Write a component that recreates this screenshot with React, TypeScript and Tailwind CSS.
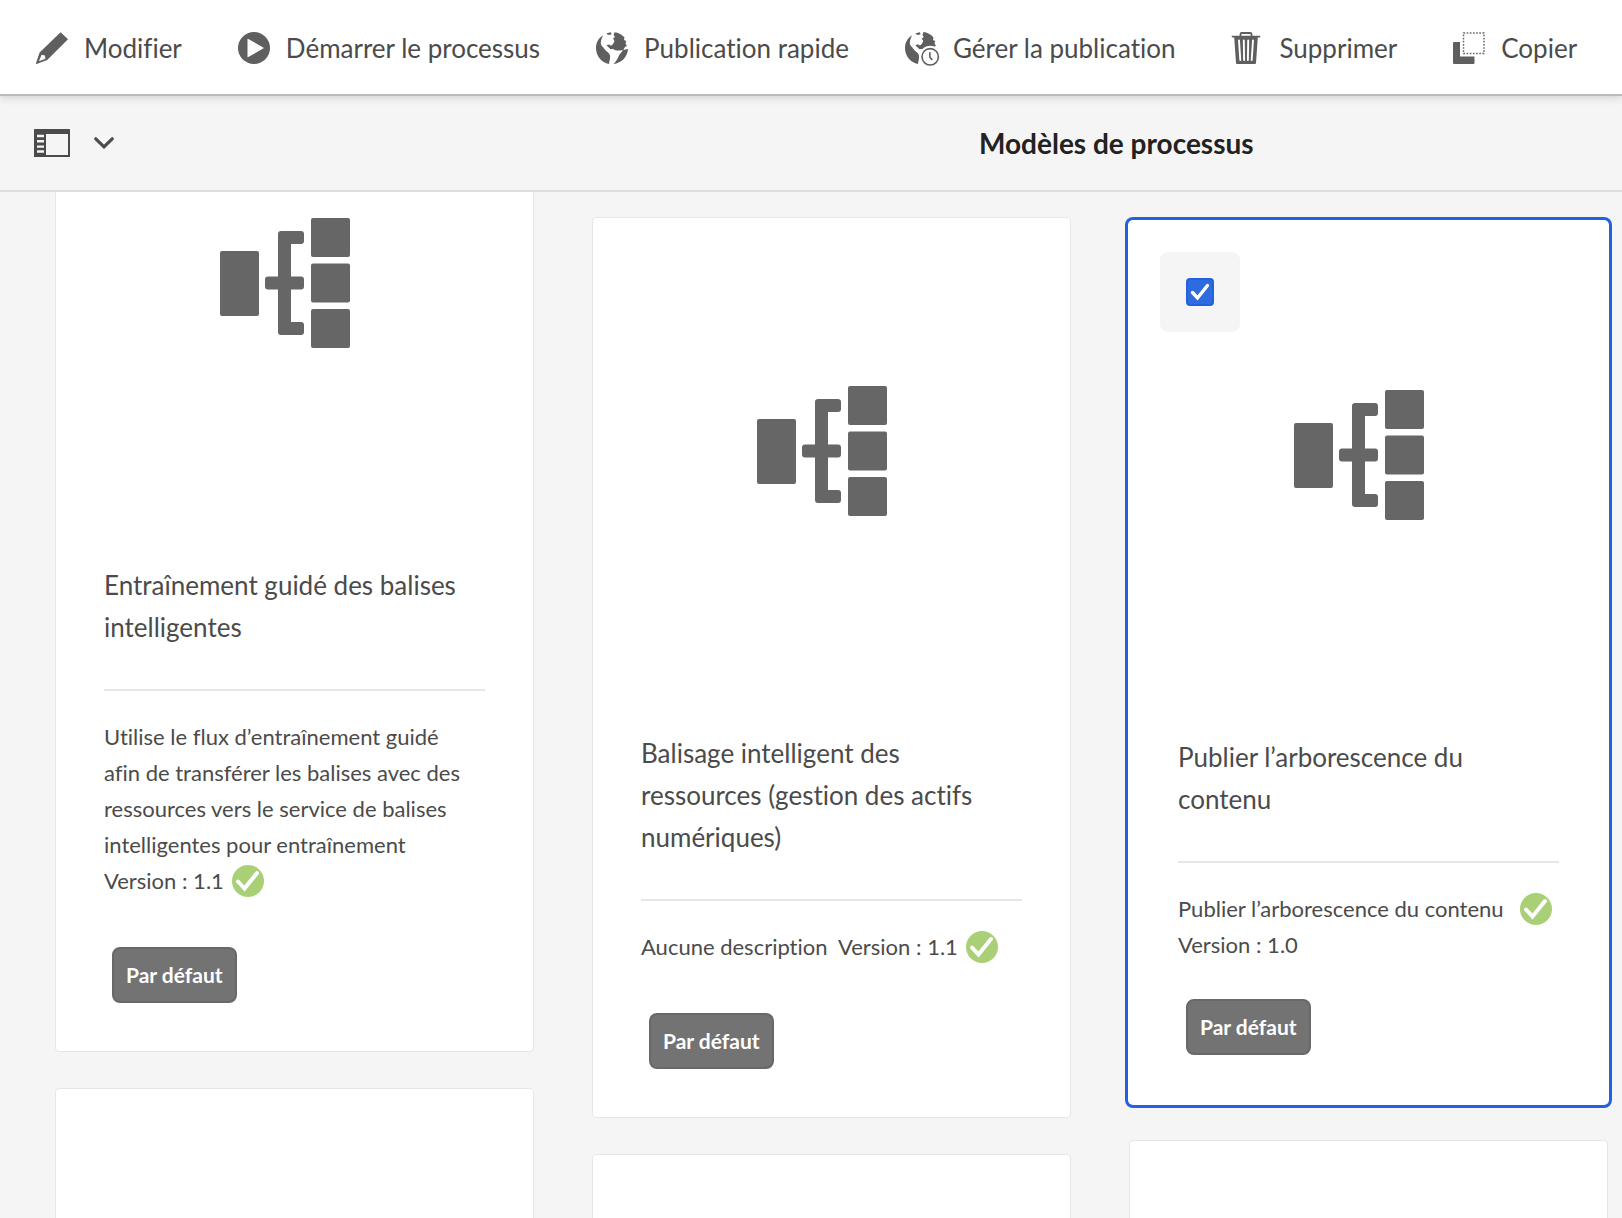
import React, { useState } from "react";

const PencilIcon = () => (
  <svg viewBox="0 0 32 32" className="size-8 shrink-0" fill="#5f5f5f" aria-hidden="true">
    <path fillRule="evenodd" d="M24.6 0.2 L32 7.2 L11.2 28 L0.6 32 Q-0.2 32 0 31.2 L3.6 20.6 Z M5.6 22.8 L2.9 29.3 L9.4 26.8 L9 23.6 Z" />
  </svg>
);

const PlayIcon = () => (
  <svg viewBox="0 0 32 32" className="size-8 shrink-0" aria-hidden="true">
    <circle cx="16" cy="16" r="16" fill="#5f5f5f" />
    <path d="M9.5 7.4 Q9.5 6.6 10.3 7 L25.2 15.4 Q26 16 25.2 16.6 L10.3 25 Q9.5 25.4 9.5 24.6 Z" fill="#fff" />
  </svg>
);

const GlobeLand = () => (
  <>
    <path d="M7 3.2 C2.5 6 0 10.500 0 16 C0 24.300 5.500 30.500 13 32 C13.300 29 14.600 26 14 23.500 C13.300 20.500 10 19.500 8.500 17 C7 14.500 4.600 13.500 4.800 10.500 C5 8 6 6 7 3.200 Z" />
    <path d="M10.500 1.200 L15 0.200 L15.500 2.200 L13.500 3 L11.500 2.600 Z" />
    <path d="M18.500 0.200 C22.500 0.600 26 2.500 28.500 5.500 L28 8 L30.200 9 L29.500 11.500 L31 14 C29 14.500 28 16 27.500 18 L24 18.600 L20 18.400 L17 17 L14.500 17.200 L10.500 13.200 L13 12.600 L15 13.800 L17 12 L18.500 9 L17 6.500 L19 5 L17.600 3 Z" />
  </>
);

const GlobeIcon = () => (
  <svg viewBox="0 0 32 32" className="size-8 shrink-0" fill="#5f5f5f" aria-hidden="true">
    <GlobeLand />
    <path d="M32 17 C31.500 25 25.500 31 17.500 32 C20 29.500 21.500 27 22.500 24.500 C23.500 22 25.500 20.500 27 18 Z" />
  </svg>
);

const GlobeClockIcon = () => (
  <svg viewBox="0 0 32 32" className="size-8 shrink-0 overflow-visible" fill="#5f5f5f" aria-hidden="true">
    <GlobeLand />
    <circle cx="25.200" cy="24.800" r="11" fill="#fff" />
    <path d="M18.500 0.200 C22.500 0.600 26 2.500 28 5.500 L27 7.500 L28.500 10 L26.500 12.500 L22 13.500 L18.500 15.500 L15 17 L10.500 13.200 L13 12.600 L15 13.800 L17 12 L18.500 9 L17 6.500 L19 5 L17.600 3 Z" />
    <circle cx="25.200" cy="24.800" r="8.200" fill="#fff" stroke="#5f5f5f" strokeWidth="1.600" />
    <path d="M24.800 20.200 V25 L27.300 28" fill="none" stroke="#5f5f5f" strokeWidth="1.600" />
  </svg>
);

const TrashIcon = () => (
  <svg viewBox="0 0 32 32" className="size-8 shrink-0" aria-hidden="true">
    <path d="M9.500 4.500 V2.200 Q9.500 1 10.700 1 H19.300 Q20.500 1 20.500 2.200 V4.500" fill="none" stroke="#5f5f5f" strokeWidth="1.800" />
    <path d="M0.800 3.800 H29.200 Q29.800 5.600 28.500 5.600 H26.800 L25 31 Q24.900 32 24 32 H6 Q5.100 32 5 31 L3.200 5.600 H1.500 Q0.200 5.600 0.800 3.800 Z" fill="#5f5f5f" />
    <path d="M8 8.500 L9.300 28 M12.800 8.500 L13.100 28 M17.200 8.500 L16.900 28 M22 8.500 L20.700 28" stroke="#fff" strokeWidth="1.900" strokeLinecap="round" />
  </svg>
);

const CopyIcon = () => (
  <svg viewBox="0 0 32 32" className="size-8 shrink-0" aria-hidden="true">
    <path d="M0 11 Q0 10 1 10 H7 V24.500 H21.500 V31 Q21.500 32 20.500 32 H1 Q0 32 0 31 Z" fill="#5f5f5f" />
    <rect x="10.500" y="1" width="20.500" height="20.500" fill="none" stroke="#6e6e6e" strokeWidth="1.500" strokeDasharray="1.700 1.450" />
  </svg>
);

const RailIcon = () => (
  <svg viewBox="0 0 36 28" className="h-7 w-9" aria-hidden="true">
    <rect width="36" height="28" rx="0.500" fill="#4b4b4b" />
    <rect x="12" y="5" width="22" height="21" fill="#f5f5f5" />
    <path d="M3 7 H10 M3 12.300 H10 M3 17.600 H10 M3 22.500 H10" stroke="#f5f5f5" strokeWidth="2.400" />
  </svg>
);

const ChevronIcon = () => (
  <svg viewBox="0 0 20 12" className="h-3 w-5" aria-hidden="true">
    <path d="M1.800 1.800 L10 9.800 L18.200 1.800" fill="none" stroke="#4b4b4b" strokeWidth="3.200" strokeLinecap="round" />
  </svg>
);

const WorkflowIcon = () => (
  <svg viewBox="0 0 150 130" className="w-[150px]" fill="#666" aria-hidden="true">
    <rect x="0" y="33" width="39" height="65" rx="2" />
    <path d="M61 13 H81 Q84 13 84 16 V23 Q84 26 81 26 H71 V58.500 H81 Q84 58.500 84 61.500 V68.500 Q84 71.500 81 71.500 H71 V104 H81 Q84 104 84 107 V114 Q84 117 81 117 H61 Q58 117 58 114 V71.500 H48 Q45 71.500 45 68.500 V61.500 Q45 58.500 48 58.500 H58 V16 Q58 13 61 13 Z" />
    <rect x="91" y="0" width="39" height="39" rx="2" />
    <rect x="91" y="45.500" width="39" height="39" rx="2" />
    <rect x="91" y="91" width="39" height="39" rx="2" />
  </svg>
);

const ValidIcon = () => (
  <svg viewBox="0 0 32 32" className="size-8 shrink-0" role="img" aria-label="Valide">
    <circle cx="16" cy="16" r="16" fill="#a9d077" />
    <path d="M6 16.500 L12.500 23.500 L25 8" fill="none" stroke="#fff" strokeWidth="4" strokeLinecap="round" />
  </svg>
);

const actions = [
  { label: "Modifier", Icon: PencilIcon },
  { label: "Démarrer le processus", Icon: PlayIcon },
  { label: "Publication rapide", Icon: GlobeIcon },
  { label: "Gérer la publication", Icon: GlobeClockIcon },
  { label: "Supprimer", Icon: TrashIcon },
  { label: "Copier", Icon: CopyIcon },
];

type CardProps = {
  title: string;
  checked?: boolean;
  onToggle?: () => void;
  children: React.ReactNode;
};

function Card({ title, checked, onToggle, children }: CardProps) {
  return (
    <article
      className={
        checked
          ? "relative rounded border border-white bg-white px-12 pb-12 shadow-[0_0_0_1px_#fff,0_0_0_4px_#2360e2]"
          : "relative rounded border border-[#e6e6e6] bg-white px-12 pb-12"
      }
    >
      {onToggle && (
        <label className="absolute left-[30px] top-[30px] grid size-20 place-items-center rounded-lg bg-[#f5f5f5]">
          <input
            type="checkbox"
            checked={!!checked}
            onChange={onToggle}
            aria-label={title}
            className="col-start-1 row-start-1 size-7 appearance-none rounded border-2 border-[#6e6e6e] bg-white checked:border-[#2360e2] checked:bg-[#2f6be0]"
          />
          {checked && (
            <svg viewBox="0 0 28 28" className="pointer-events-none col-start-1 row-start-1 size-7" aria-hidden="true">
              <path d="M6.500 14.500 L11.500 20 L21.500 7.500" fill="none" stroke="#fff" strokeWidth="3.400" strokeLinecap="round" />
            </svg>
          )}
        </label>
      )}
      <div className="flex h-[466px] items-center justify-center">
        <WorkflowIcon />
      </div>
      <h2 className="mt-12 whitespace-pre-line text-[26px] leading-[42px]">{title}</h2>
      <div className="mt-[41px] border-t-2 border-[#e6e6e6] pt-7 text-[22px] leading-9">{children}</div>
    </article>
  );
}

const DefaultTag = () => (
  <span className="ml-2 flex h-14 w-fit items-center rounded-lg border-2 border-[#686868] bg-[#737373] px-3 text-[21px] font-bold text-white">
    Par défaut
  </span>
);

const EmptyCard = () => <article className="h-[600px] shrink-0 rounded border border-[#e6e6e6] bg-white" />;

export default function App() {
  const [selected, setSelected] = useState(true);
  return (
    <div className="flex h-screen flex-col overflow-hidden bg-[#f5f5f5] font-['Lato',sans-serif] text-[#4b4b4b] [font-variant-ligatures:no-common-ligatures]">
      <header className="z-10 flex shrink-0 items-center gap-14 border-b-2 border-[#bcbcbc] bg-white pt-7 pb-[26px] pl-9 shadow-[0_2px_8px_rgba(0,0,0,0.15)]">
        {actions.map(({ label, Icon }) => (
          <button key={label} type="button" className="flex shrink-0 items-center gap-4 whitespace-nowrap text-[26px] leading-10">
            <Icon />
            {label}
          </button>
        ))}
      </header>

      <div className="flex h-24 shrink-0 items-center border-b-2 border-[#dedede] pl-[34px]">
        <button type="button" aria-label="Afficher le panneau" className="flex items-center gap-6">
          <RailIcon />
          <ChevronIcon />
        </button>
        <h1 className="ml-[865px] whitespace-nowrap text-[28px] font-bold leading-10 text-[#222]">Modèles de processus</h1>
      </div>

      <main className="min-h-0 flex-1 overflow-hidden">
        <div className="-mt-[143px] grid grid-cols-3 items-start gap-x-[58px] pl-[55px] pr-[14px]">
          <div className="flex flex-col gap-9">
            <Card title={"Entraînement guidé des balises\nintelligentes"}>
              <p className="whitespace-pre-line">
                {"Utilise le flux d’entraînement guidé\nafin de transférer les balises avec des\nressources vers le service de balises\nintelligentes pour entraînement"}
              </p>
              <div className="mb-12 flex h-9 items-center gap-2">
                <p>Version : 1.1</p>
                <ValidIcon />
              </div>
              <DefaultTag />
            </Card>
            <EmptyCard />
          </div>

          <div className="flex flex-col gap-9 pt-[168px]">
            <Card title={"Balisage intelligent des\nressources (gestion des actifs\nnumériques)"}>
              <div className="mb-12 flex h-9 items-center gap-2 whitespace-nowrap">
                <p>Aucune description&nbsp; Version : 1.1</p>
                <ValidIcon />
              </div>
              <DefaultTag />
            </Card>
            <EmptyCard />
          </div>

          <div className="flex flex-col gap-9 pt-[172px]">
            <Card title={"Publier l’arborescence du\ncontenu"} checked={selected} onToggle={() => setSelected(!selected)}>
              <div className="flex h-9 items-center gap-4 whitespace-nowrap">
                <p>Publier l’arborescence du contenu</p>
                <ValidIcon />
              </div>
              <p className="mb-9">Version : 1.0</p>
              <DefaultTag />
            </Card>
            <EmptyCard />
          </div>
        </div>
      </main>
    </div>
  );
}
